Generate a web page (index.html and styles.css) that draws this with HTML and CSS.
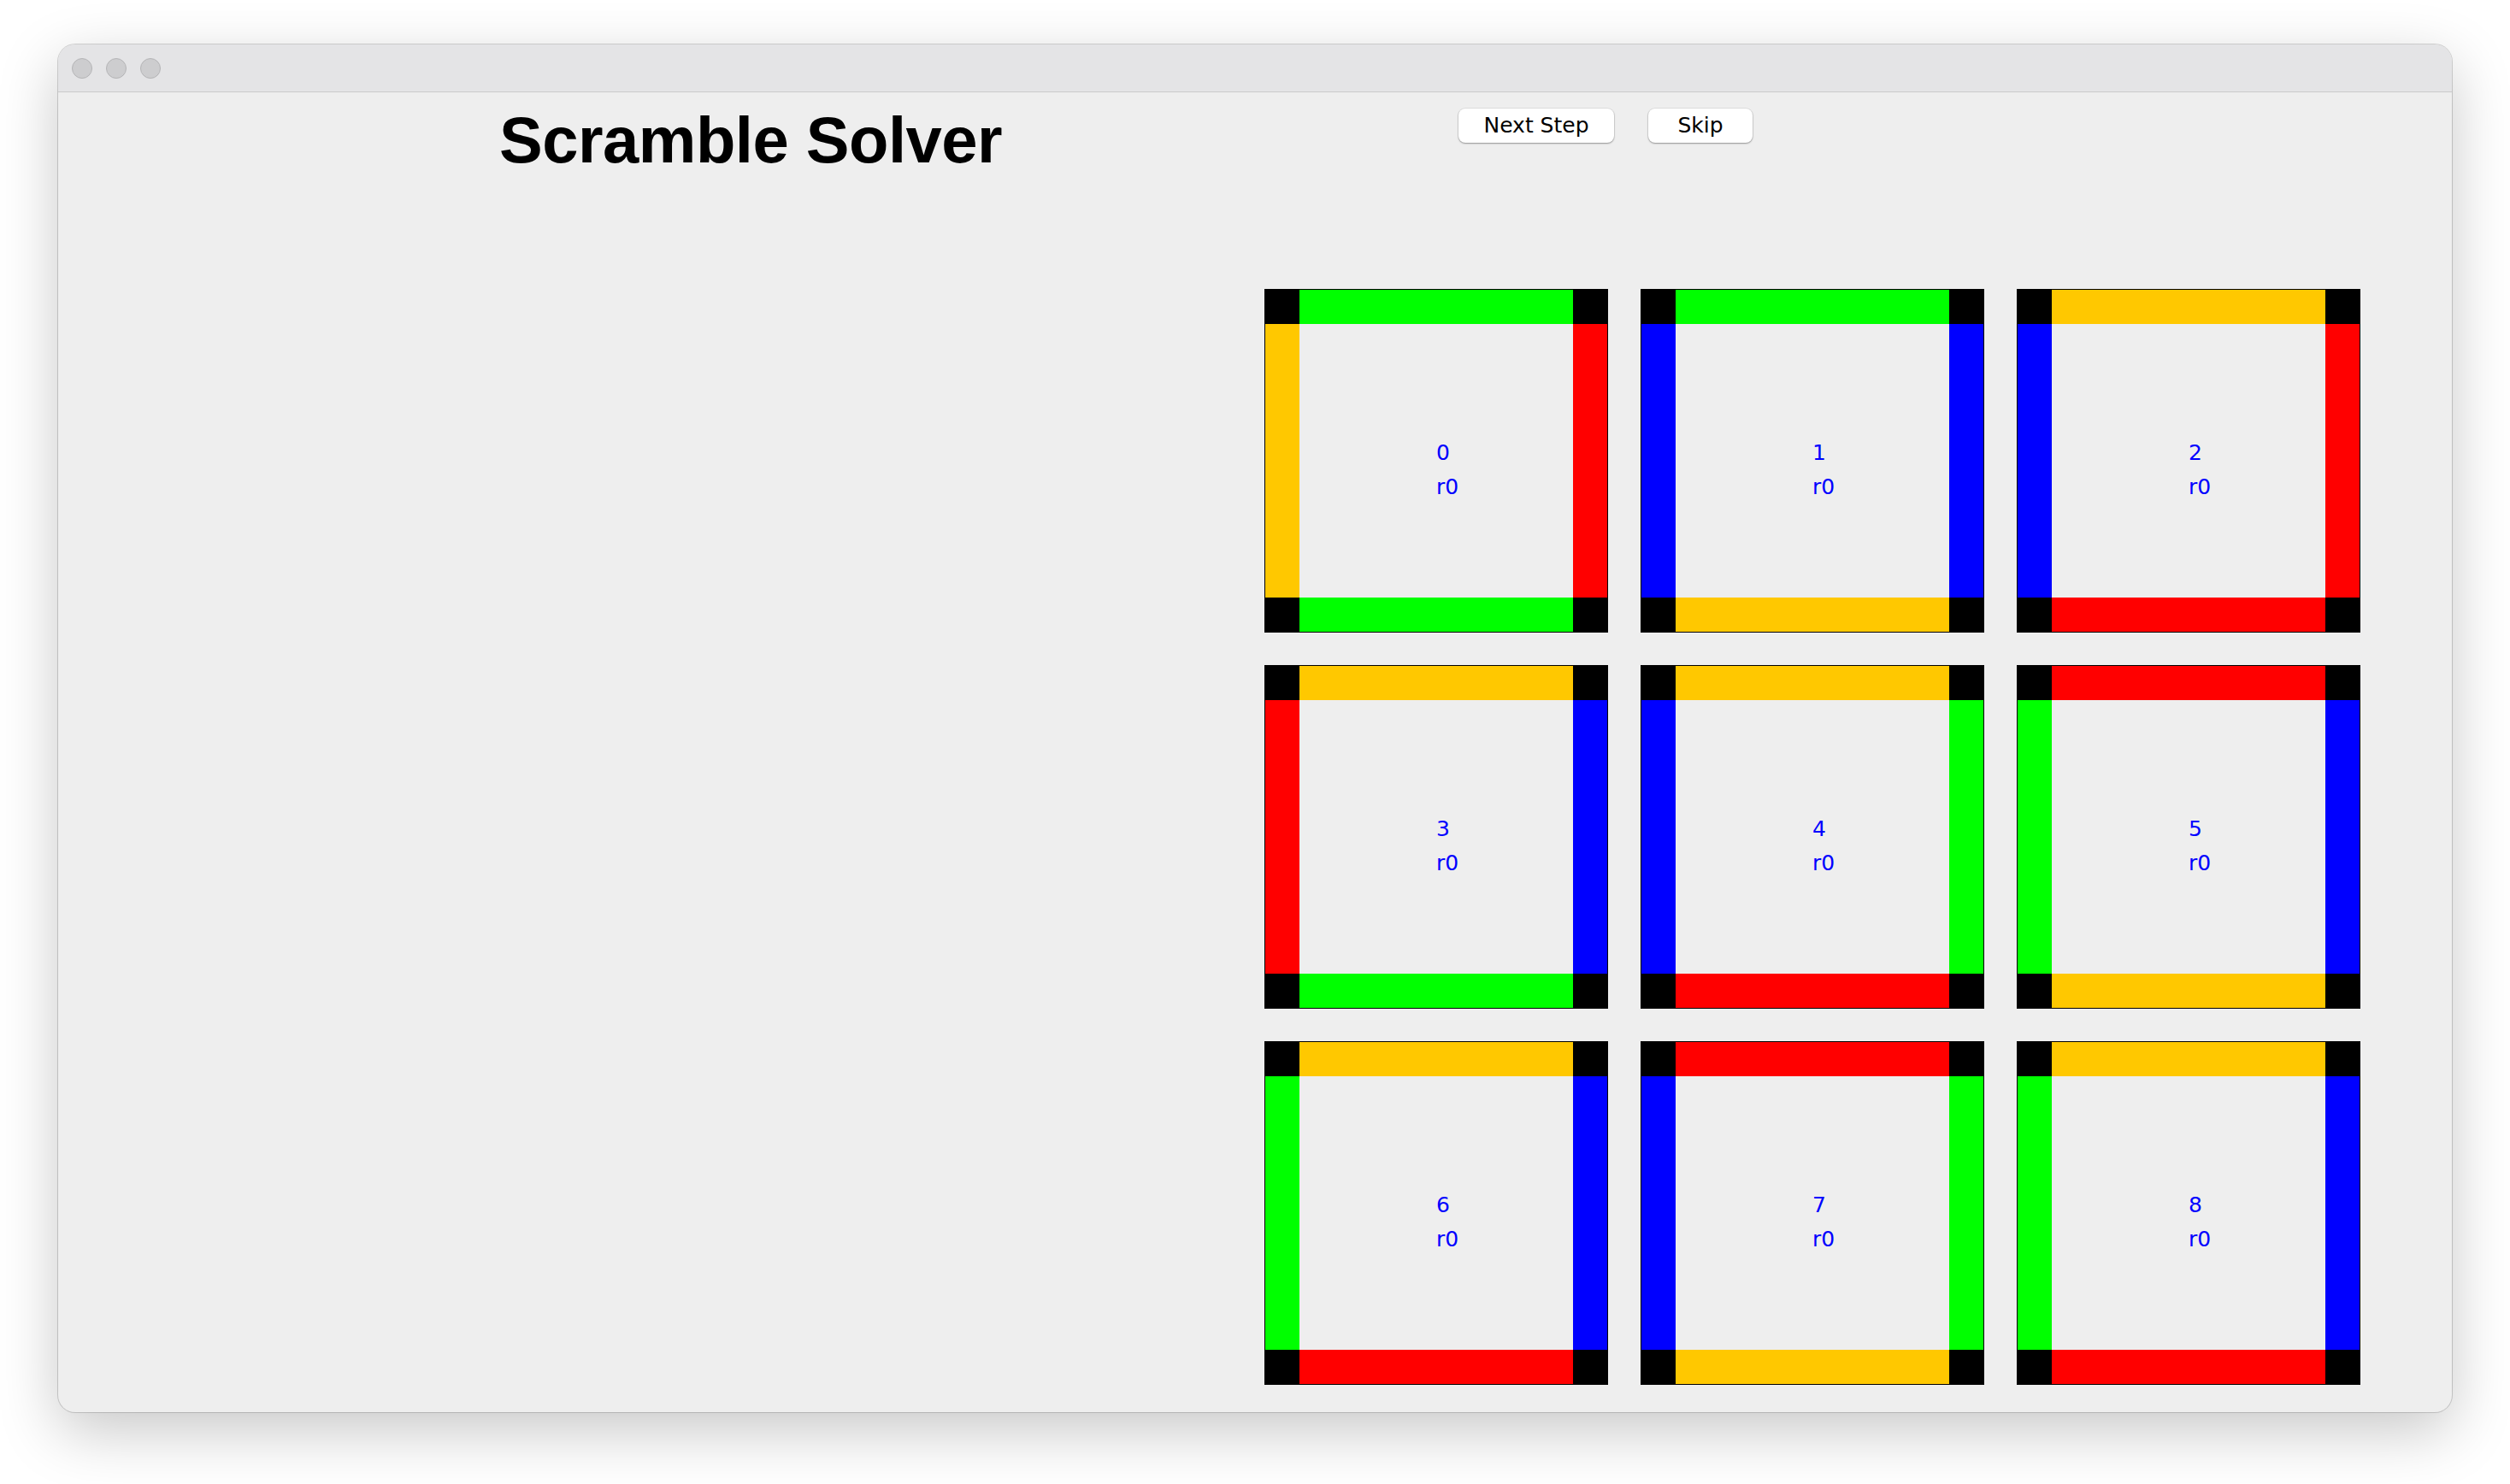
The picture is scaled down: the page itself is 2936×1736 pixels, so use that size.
FILE: index.html
```html
<!DOCTYPE html>
<html>
<head>
<meta charset="utf-8">
<title>Scramble Solver</title>
<link rel="stylesheet" href="styles.css">
</head>
<body>
<div class="window">
  <div class="titlebar">
    <span class="light"></span><span class="light"></span><span class="light"></span>
  </div>
  <div class="content">
    <div class="header">
      <div class="title-area"><h1 class="title">Scramble Solver</h1></div>
      <div class="buttons">
        <button class="btn btn-next">Next Step</button>
        <button class="btn btn-skip">Skip</button>
      </div>
    </div>
    <div class="board">
      <div class="tile">
        <div class="c"></div><div class="bar g"></div><div class="c"></div>
        <div class="bar y"></div><div class="mid"><div class="lbl">0</div><div class="lbl">r0</div></div><div class="bar r"></div>
        <div class="c"></div><div class="bar g"></div><div class="c"></div>
      </div>
      <div class="tile">
        <div class="c"></div><div class="bar g"></div><div class="c"></div>
        <div class="bar b"></div><div class="mid"><div class="lbl">1</div><div class="lbl">r0</div></div><div class="bar b"></div>
        <div class="c"></div><div class="bar y"></div><div class="c"></div>
      </div>
      <div class="tile">
        <div class="c"></div><div class="bar y"></div><div class="c"></div>
        <div class="bar b"></div><div class="mid"><div class="lbl">2</div><div class="lbl">r0</div></div><div class="bar r"></div>
        <div class="c"></div><div class="bar r"></div><div class="c"></div>
      </div>
      <div class="tile">
        <div class="c"></div><div class="bar y"></div><div class="c"></div>
        <div class="bar r"></div><div class="mid"><div class="lbl">3</div><div class="lbl">r0</div></div><div class="bar b"></div>
        <div class="c"></div><div class="bar g"></div><div class="c"></div>
      </div>
      <div class="tile">
        <div class="c"></div><div class="bar y"></div><div class="c"></div>
        <div class="bar b"></div><div class="mid"><div class="lbl">4</div><div class="lbl">r0</div></div><div class="bar g"></div>
        <div class="c"></div><div class="bar r"></div><div class="c"></div>
      </div>
      <div class="tile">
        <div class="c"></div><div class="bar r"></div><div class="c"></div>
        <div class="bar g"></div><div class="mid"><div class="lbl">5</div><div class="lbl">r0</div></div><div class="bar b"></div>
        <div class="c"></div><div class="bar y"></div><div class="c"></div>
      </div>
      <div class="tile">
        <div class="c"></div><div class="bar y"></div><div class="c"></div>
        <div class="bar g"></div><div class="mid"><div class="lbl">6</div><div class="lbl">r0</div></div><div class="bar b"></div>
        <div class="c"></div><div class="bar r"></div><div class="c"></div>
      </div>
      <div class="tile">
        <div class="c"></div><div class="bar r"></div><div class="c"></div>
        <div class="bar b"></div><div class="mid"><div class="lbl">7</div><div class="lbl">r0</div></div><div class="bar g"></div>
        <div class="c"></div><div class="bar y"></div><div class="c"></div>
      </div>
      <div class="tile">
        <div class="c"></div><div class="bar y"></div><div class="c"></div>
        <div class="bar g"></div><div class="mid"><div class="lbl">8</div><div class="lbl">r0</div></div><div class="bar b"></div>
        <div class="c"></div><div class="bar r"></div><div class="c"></div>
      </div>
    </div>
  </div>
</div>
</body>
</html>
```

FILE: styles.css
```css
html, body {
  margin: 0;
  padding: 0;
  background: #ffffff;
}
body {
  width: 2936px;
  height: 1736px;
  overflow: hidden;
  padding-top: 52px;
  padding-left: 68px;
  box-sizing: border-box;
  font-family: "DejaVu Sans", "Liberation Sans", sans-serif;
}
.window {
  width: 2800px;
  height: 1600px;
  border-radius: 20px;
  background: #eeeeee;
  box-shadow: 0 0 0 1px rgba(0,0,0,0.16), 0 22px 70px rgba(0,0,0,0.22);
  overflow: hidden;
  display: flex;
  flex-direction: column;
}
.titlebar {
  height: 55px;
  flex: none;
  background: #e4e4e6;
  border-bottom: 1px solid #cacaca;
  display: flex;
  align-items: center;
  padding-left: 16px;
  gap: 16px;
}
.light {
  width: 22px;
  height: 22px;
  border-radius: 50%;
  background: #cdcdcf;
  border: 1px solid #b4b4b6;
}
.content {
  flex: 1;
  display: flex;
  flex-direction: column;
}
.header {
  display: flex;
  align-items: flex-start;
  height: 93px;
}
.title-area {
  width: 1638px;
  flex: none;
  box-sizing: border-box;
  padding-left: 516px;
  padding-top: 18px;
}
.title {
  margin: 0;
  font-family: "Liberation Sans", Arial, sans-serif;
  font-weight: bold;
  font-size: 76px;
  line-height: 76px;
  letter-spacing: -0.5px;
  color: #000;
  white-space: nowrap;
}
.buttons {
  display: flex;
  gap: 40px;
  padding-top: 19px;
}
.btn {
  height: 40px;
  padding: 0;
  border: none;
  border-radius: 8px;
  background: #ffffff;
  box-shadow: 0 0 0 1px rgba(0,0,0,0.06), 0 1px 2px rgba(0,0,0,0.35);
  font-family: "DejaVu Sans", sans-serif;
  font-size: 25px;
  line-height: 40px;
  color: #000;
}
.btn-next { width: 182px; }
.btn-skip { width: 122px; }
.board {
  margin-top: 137px;
  display: grid;
  grid-template-columns: repeat(3, 402px);
  grid-auto-rows: 402px;
  gap: 38px;
  justify-content: end;
  padding-right: 107px;
}
.tile {
  border: 1px solid #000;
  display: grid;
  grid-template-columns: 40px 320px 40px;
  grid-template-rows: 40px 320px 40px;
}
.c { background: #000; }
.g { background: #00ff00; }
.r { background: #ff0000; }
.b { background: #0000ff; }
.y { background: #ffc800; }
.mid {
  padding-top: 131px;
  padding-left: 160px;
  box-sizing: border-box;
}
.lbl {
  font-family: "DejaVu Sans", sans-serif;
  font-size: 25px;
  line-height: 40px;
  color: #0000ff;
}
```
